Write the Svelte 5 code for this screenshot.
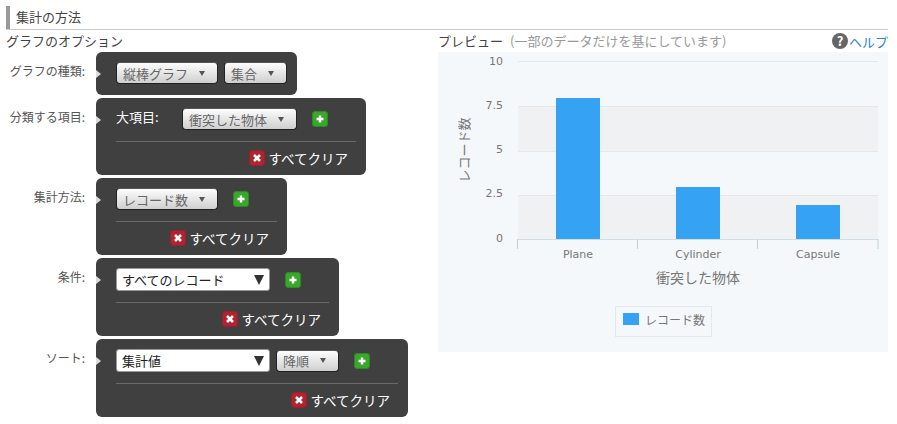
<script>
  const yTicks = [
    { label: '10', y: 61, textY: 65 },
    { label: '7.5', y: 106, textY: 109 },
    { label: '5', y: 151, textY: 153 },
    { label: '2.5', y: 195, textY: 197 },
    { label: '0', y: 239, textY: 242 }
  ];
  const bars = [
    { name: 'Plane', x: 556, top: 98 },
    { name: 'Cylinder', x: 676, top: 187 },
    { name: 'Capsule', x: 796, top: 205 }
  ];
  const axisTicks = [517.5, 637.5, 757.5, 878];
</script>

{#snippet dropdown(text, width)}
  <div class="btn" style:width="{width}px"><span>{text}</span><i class="caret"></i></div>
{/snippet}

{#snippet picker(text)}
  <div class="picker"><span>{text}</span><i class="big-caret"></i></div>
{/snippet}

{#snippet plus()}
  <svg class="plus" width="16" height="16" viewBox="0 0 16 16">
    <rect x="0.5" y="0.5" width="15" height="15" rx="2.5" fill="#3ba62c" stroke="#2f8a22" />
    <path d="M8 4.5v7M4.5 8h7" stroke="#fff" stroke-width="2.4" />
  </svg>
{/snippet}

{#snippet clear()}
  <div class="divider"></div>
  <div class="clear">
    <svg width="16" height="16" viewBox="0 0 16 16">
      <rect x="0.5" y="0.5" width="15" height="15" rx="2.5" fill="#b0232f" stroke="#8f2530" />
      <path d="M5 5l6 6M11 5l-6 6" stroke="#fff" stroke-width="2.6" />
    </svg>
    <span>すべてクリア</span>
  </div>
{/snippet}

<div class="page">
  <h2 class="title">集計の方法</h2>
  <div class="columns">
    <section class="options">
      <h3>グラフのオプション</h3>

      <div class="row first">
        <div class="label">グラフの種類:</div>
        <div class="panel">
          <div class="line">
            {@render dropdown('縦棒グラフ', 102)}
            {@render dropdown('集合', 63)}
          </div>
        </div>
      </div>

      <div class="row">
        <div class="label">分類する項目:</div>
        <div class="panel">
          <div class="line">
            <span class="sub">大項目:</span>
            {@render dropdown('衝突した物体', 115)}
            {@render plus()}
          </div>
          {@render clear()}
        </div>
      </div>

      <div class="row">
        <div class="label">集計方法:</div>
        <div class="panel">
          <div class="line">
            {@render dropdown('レコード数', 102)}
            {@render plus()}
          </div>
          {@render clear()}
        </div>
      </div>

      <div class="row">
        <div class="label">条件:</div>
        <div class="panel">
          <div class="line">
            {@render picker('すべてのレコード')}
            {@render plus()}
          </div>
          {@render clear()}
        </div>
      </div>

      <div class="row">
        <div class="label">ソート:</div>
        <div class="panel">
          <div class="line">
            {@render picker('集計値')}
            {@render dropdown('降順', 63)}
            {@render plus()}
          </div>
          {@render clear()}
        </div>
      </div>
    </section>

    <section class="preview">
      <div class="preview-head">
        <h3>プレビュー<span class="note">(一部のデータだけを基にしています)</span></h3>
        <div class="help"><i class="help-icon">?</i><span>ヘルプ</span></div>
      </div>
      <svg class="chart" width="450" height="300" viewBox="438 52 450 300">
        <rect x="518" y="106" width="360" height="45" fill="#f0f1f3" />
        <rect x="518" y="195" width="360" height="44" fill="#f0f1f3" />
        {#each yTicks as t}
          <line x1="518" x2="878" y1={t.y + 0.5} y2={t.y + 0.5} stroke="#e4e8eb" />
          <text class="tick" x="503" y={t.textY} text-anchor="end">{t.label}</text>
        {/each}
        {#each bars as b}
          <rect x={b.x} y={b.top} width="44" height={239 - b.top} fill="#36a2f3" />
          <text class="tick" x={b.x + 22} y="258" text-anchor="middle">{b.name}</text>
        {/each}
        <line x1="517" x2="878" y1="239.5" y2="239.5" stroke="#d3dde6" />
        {#each axisTicks as x}
          <line x1={x} x2={x} y1="239" y2="249" stroke="#c0d0e0" />
        {/each}
        <text class="axis" x="698" y="283" text-anchor="middle">衝突した物体</text>
        <text class="axis y" transform="translate(469 150) rotate(-90)" text-anchor="middle">レコード数</text>
        <rect x="615.5" y="306.5" width="96" height="30" fill="none" stroke="#e4e8eb" />
        <rect x="623" y="313" width="16" height="12" fill="#36a2f3" />
        <text class="legend" x="645" y="325">レコード数</text>
      </svg>
    </section>
  </div>
</div>

<style>
  :global(body) {
    margin: 0;
    background: #fff;
  }
  .page {
    width: 897px;
    height: 424px;
    box-sizing: border-box;
    padding: 6px 9px 0 6px;
    font-family: "Noto Sans CJK JP", "Noto Sans", sans-serif;
    font-size: 13px;
    color: #444;
    overflow: hidden;
  }
  .title {
    position: relative;
    margin: 0;
    height: 23px;
    line-height: 21px;
    padding-left: 6px;
    border-left: 4px solid #999;
    border-bottom: 1px solid #ccc;
    font-size: 13px;
    font-weight: 400;
    color: #444;
  }
  .title::after {
    content: "";
    position: absolute;
    left: -4px;
    bottom: -1px;
    width: 4px;
    height: 1px;
    background: #ccc;
  }
  .columns {
    display: flex;
  }
  .options {
    width: 432px;
  }
  h3 {
    margin: 0;
    font-size: 13px;
    font-weight: 400;
    line-height: 22px;
    color: #444;
  }
  .row {
    display: flex;
    align-items: flex-start;
    margin-left: -6px;
    margin-top: 3px;
  }
  .row.first {
    margin-top: 0;
  }
  .first .panel {
    padding-bottom: 11px;
  }
  .label {
    width: 85px;
    margin-right: 11px;
    padding-top: 10px;
    text-align: right;
    font-size: 12px;
    line-height: 18px;
    color: #555;
  }
  .panel {
    position: relative;
    box-sizing: border-box;
    padding: 10px 10px 9px 20px;
    background: #404040;
    border-radius: 6px;
  }
  .panel::before {
    content: "";
    position: absolute;
    left: 0;
    top: 18px;
    border-left: 5px solid #ddd;
    border-top: 4px solid transparent;
    border-bottom: 4px solid transparent;
  }
  .line {
    display: flex;
    align-items: center;
    gap: 6px;
    min-height: 22px;
  }
  .sub {
    width: 60px;
    align-self: flex-start;
    color: #fff;
    font-size: 13px;
    line-height: 18px;
  }
  .btn {
    box-sizing: border-box;
    height: 22px;
    display: flex;
    align-items: center;
    justify-content: space-between;
    padding: 0 12px 0 6px;
    border-radius: 4px;
    border: 1px solid #222;
    border-top-color: #555;
    background: linear-gradient(#fdfdfd, #cfcfcf);
    color: #666;
    font-size: 13px;
    white-space: nowrap;
  }
  .caret {
    border-top: 5px solid #555;
    border-left: 3.5px solid transparent;
    border-right: 3.5px solid transparent;
  }
  .picker {
    box-sizing: border-box;
    width: 154px;
    height: 23px;
    display: flex;
    align-items: center;
    justify-content: space-between;
    padding: 0 5px;
    border-radius: 3px;
    border: 1px solid #999;
    background: #fff;
    color: #222;
    font-size: 13px;
    white-space: nowrap;
  }
  .big-caret {
    border-top: 10px solid #333;
    border-left: 5.5px solid transparent;
    border-right: 5.5px solid transparent;
  }
  .plus {
    margin-left: 9px;
    margin-right: 28px;
    flex: none;
  }
  .divider {
    height: 1px;
    margin: 11px 0 8px;
    background: #6a6a6a;
  }
  .clear {
    display: flex;
    justify-content: flex-end;
    align-items: center;
    gap: 3px;
    height: 16px;
    padding-right: 8px;
    color: #fff;
    font-size: 13.5px;
  }
  .preview-head {
    display: flex;
    justify-content: space-between;
    align-items: center;
    height: 22px;
  }
  .preview {
    flex: 1;
  }
  .note {
    margin-left: 7px;
    color: #999;
  }
  .help {
    display: flex;
    align-items: center;
    gap: 1px;
    color: #2b7fd6;
    font-size: 13px;
  }
  .help-icon {
    width: 16px;
    height: 16px;
    border-radius: 50%;
    background: #666;
    color: #fff;
    font-style: normal;
    font-weight: 700;
    font-size: 13px;
    line-height: 16px;
    text-align: center;
  }
  .chart {
    display: block;
    background: #f5f8fa;
  }
  .tick {
    font-family: "DejaVu Sans", sans-serif;
    font-size: 11px;
    fill: #777;
  }
  .axis {
    font-size: 14px;
    fill: #777;
  }
  .axis.y {
    font-size: 13px;
  }
  .legend {
    font-size: 12px;
    fill: #777;
  }
</style>
